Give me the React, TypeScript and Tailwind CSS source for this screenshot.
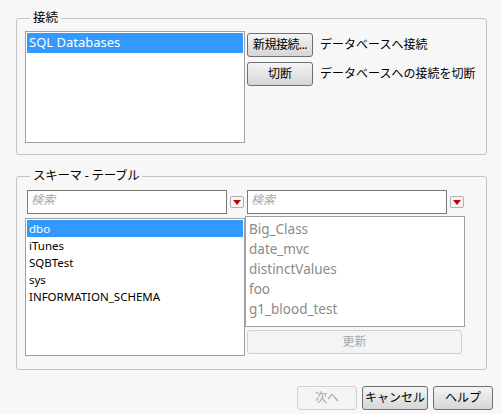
// 接続ダイアログ（データベース接続・スキーマ選択）

import React from "react";

const ui = "font-['Noto_Sans','Noto_Sans_CJK_JP',sans-serif]";

function Btn({ children, className = "", disabled = false }: { children: React.ReactNode; className?: string; disabled?: boolean }) {
  return (
    <button
      disabled={disabled}
      className={`flex h-[24px] items-center justify-center whitespace-nowrap rounded-[3px] border text-[12px] leading-none ${
        disabled
          ? "border-[#d0d0d0] bg-[#f4f4f4] text-[#a8a8a8]"
          : "border-[#707070] bg-gradient-to-b from-[#f4f4f4] to-[#d6d6d6] text-black"
      } ${className}`}
    >
      {children}
    </button>
  );
}

function SearchRow() {
  return (
    <div className="flex items-center pl-[2px]">
      <div className="flex h-[24px] w-[200px] items-start border border-[#7a7a7a] bg-white pl-[3px]">
        <span className="text-[12px] italic leading-[18px] text-[#a8a8a8]">検索</span>
      </div>
      <div className="ml-[3px] flex h-[12px] w-[14px] items-center justify-center rounded-[2px] border border-[#b0b0b0] bg-[#f6f6f6]">
        <svg width="8" height="5" viewBox="0 0 8 5">
          <path d="M0 0 L8 0 L4 5 Z" fill="#c80000" />
        </svg>
      </div>
    </div>
  );
}

export default function App() {
  const schemas = ["dbo", "iTunes", "SQBTest", "sys", "INFORMATION_SCHEMA"];
  const tables = ["Big_Class", "date_mvc", "distinctValues", "foo", "g1_blood_test"];

  return (
    <div className={`h-[414px] w-[502px] overflow-hidden bg-[#f7f7f7] pt-[10px] pl-[16px] ${ui}`}>
      {/* 接続 */}
      <fieldset className="w-[471px] rounded-[3px] border border-[#c4c4c4] pb-[11px] pl-[8px]">
        <legend className="ml-[5px] px-[3px] text-[12.5px] leading-[16px] text-black">接続</legend>
        <div className="mt-[5px] flex">
          <div className="h-[112px] w-[220px] border border-[#a0a0a0] bg-white p-[1px]">
            <div className="flex h-[20px] items-center bg-[#3399ff] pl-[2px] text-[13px] text-white">SQL Databases</div>
          </div>
          <div className="ml-[2px] flex flex-col gap-[5px] pt-[2px]">
            <div className="flex items-center">
              <Btn className="w-[66px] tracking-[-0.5px]">新規接続...</Btn>
              <span className="ml-[7px] whitespace-nowrap text-[12px] text-black">データベースへ接続</span>
            </div>
            <div className="flex items-center">
              <Btn className="w-[66px]">切断</Btn>
              <span className="ml-[7px] whitespace-nowrap text-[12px] text-black">データベースへの接続を切断</span>
            </div>
          </div>
        </div>
      </fieldset>

      {/* スキーマ - テーブル */}
      <fieldset className="mt-[13px] h-[202px] w-[471px] rounded-[3px] border border-[#c4c4c4] pl-[8px]">
        <legend className="ml-[5px] px-[3px] text-[12.5px] leading-[16px] tracking-[-0.3px] text-black">スキーマ - テーブル</legend>
        <div className="mt-[6px] flex">
          <div className="w-[220px]">
            <SearchRow />
            <div className="mt-[4px] h-[138px] border border-[#a0a0a0] bg-white p-[1px]">
              {schemas.map((s, i) => (
                <div
                  key={s}
                  className={`flex h-[17px] items-center pl-[2px] text-[11.5px] ${i === 0 ? "bg-[#3399ff] text-white" : "text-black"}`}
                >
                  {s}
                </div>
              ))}
            </div>
          </div>
          <div className="w-[220px]">
            <SearchRow />
            <div className="mt-[2px] h-[111px] border border-[#a0a0a0] bg-white pt-[2px]">
              {tables.map((t) => (
                <div key={t} className="flex h-[20px] items-center pl-[3px] text-[13.5px] text-[#8a8a8a]">
                  {t}
                </div>
              ))}
            </div>
            <div className="mt-[3px] pl-[2px]">
              <Btn disabled className="w-[215px]">更新</Btn>
            </div>
          </div>
        </div>
      </fieldset>

      {/* 下部ボタン */}
      <div className="mt-[16px] flex w-[477px] justify-end gap-[5px]">
        <Btn disabled className="w-[60px]">次へ</Btn>
        <Btn className="w-[66px]">キャンセル</Btn>
        <Btn className="w-[60px]">ヘルプ</Btn>
      </div>
    </div>
  );
}
